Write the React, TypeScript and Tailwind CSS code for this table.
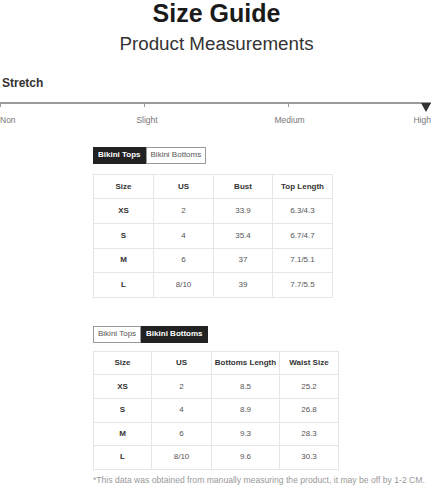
import React from "react";

const tops = {
  head: ["Size", "US", "Bust", "Top Length"],
  widths: [60, 60, 59, 60],
  rows: [
    ["XS", "2", "33.9", "6.3/4.3"],
    ["S", "4", "35.4", "6.7/4.7"],
    ["M", "6", "37", "7.1/5.1"],
    ["L", "8/10", "39", "7.7/5.5"],
  ],
};

const bottoms = {
  head: ["Size", "US", "Bottoms Length", "Waist Size"],
  widths: [58, 60, 68, 59],
  rows: [
    ["XS", "2", "8.5", "25.2"],
    ["S", "4", "8.9", "26.8"],
    ["M", "6", "9.3", "28.3"],
    ["L", "8/10", "9.6", "30.3"],
  ],
};

function Tabs({ active }: { active: 0 | 1 }) {
  const on = "bg-[#222] text-white font-bold border border-[#222]";
  const off = "bg-white text-[#555] border border-[#999]";
  return (
    <div className="flex h-[17px] text-[8px] leading-none">
      <div className={`flex items-center px-[4px] ${active === 0 ? on : off}`}>Bikini Tops</div>
      <div className={`flex items-center px-[4px] ${active === 1 ? on : off}`}>Bikini Bottoms</div>
    </div>
  );
}

function Table({ data, rowH }: { data: typeof tops; rowH: string }) {
  return (
    <table className="border-collapse text-[8px] leading-none">
      <thead>
        <tr>
          {data.head.map((h, i) => (
            <th
              key={h}
              style={{ width: data.widths[i] }}
              className={`border border-[#e6e6e6] ${rowH} font-bold text-[#333] text-center p-0`}
            >
              {h}
            </th>
          ))}
        </tr>
      </thead>
      <tbody>
        {data.rows.map((r, ri) => (
          <tr key={ri}>
            {r.map((c, ci) => (
              <td
                key={ci}
                className={`border border-[#e6e6e6] ${rowH} text-center p-0 ${ci === 0 ? "font-bold text-[#333]" : "text-[#555]"}`}
              >
                {c}
              </td>
            ))}
          </tr>
        ))}
      </tbody>
    </table>
  );
}

export default function App() {
  return (
    <div className="w-[433px] h-[488px] bg-white overflow-hidden font-['Liberation_Sans',Arial,sans-serif]">
      <div className="flex flex-col items-center">
        <h1 className="text-[25px] font-bold leading-none text-[#1a1a1a] mt-[0px] h-[27px] flex items-center">Size Guide</h1>
        <h2 className="text-[18.8px] leading-none text-[#333] mt-[8px]">Product Measurements</h2>
      </div>
      <div className="mt-[23px] pl-[2px] text-[12px] font-bold text-[#333] leading-none">Stretch</div>
      <div className="relative mt-[13px] h-[24px] mr-[2px]">
        <div className="h-[2px] bg-[#9a9a9a]" />
        <div className="absolute left-0 top-0 w-[1px] h-[5px] bg-[#9a9a9a]" />
        <div className="absolute left-[144px] top-0 w-[1px] h-[5px] bg-[#9a9a9a]" />
        <div className="absolute left-[288px] top-0 w-[1px] h-[5px] bg-[#9a9a9a]" />
        <svg className="absolute left-[421px] top-[1px]" width="10" height="9" viewBox="0 0 10 9">
          <polygon points="0,0 10,0 5,9" fill="#333" />
        </svg>
        <div className="flex justify-between text-[8.5px] text-[#777] leading-none mt-[12px]">
          <span>Non</span>
          <span className="ml-[12px]">Slight</span>
          <span className="ml-[8px]">Medium</span>
          <span>High</span>
        </div>
      </div>
      <div className="pl-[93px] mt-[21px]">
        <Tabs active={0} />
        <div className="mt-[10px]">
          <Table data={tops} rowH="h-[24.6px]" />
        </div>
        <div className="mt-[28px]">
          <Tabs active={1} />
        </div>
        <div className="mt-[8px]">
          <Table data={bottoms} rowH="h-[23.6px]" />
        </div>
        <p className="mt-[6px] text-[8.6px] text-[#999] leading-none whitespace-nowrap">
          *This data was obtained from manually measuring the product, it may be off by 1-2 CM.
        </p>
      </div>
    </div>
  );
}
